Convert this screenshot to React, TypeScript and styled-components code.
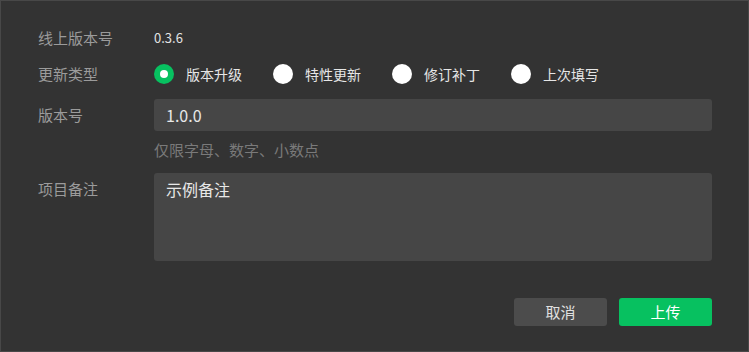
import React, { useState } from "react";
import styled, { createGlobalStyle } from "styled-components";

const Global = createGlobalStyle`
  html, body { margin: 0; padding: 0; background: #333333; }
  * { box-sizing: border-box; }
  body { font-family: "Microsoft YaHei", "Noto Sans CJK SC", "Noto Sans", sans-serif; }
`;

const Dialog = styled.div`
  width: 749px;
  height: 352px;
  background: #333333;
  border: 1px solid #484848;
  padding: 27px 36px 0 37px;
  display: flex;
  flex-direction: column;
`;

const Row = styled.div<{ $mt?: number; $h: number }>`
  display: flex;
  align-items: flex-start;
  margin-top: ${(p) => p.$mt ?? 0}px;
  min-height: ${(p) => p.$h}px;
`;

const Label = styled.div<{ $lh: number }>`
  width: 116px;
  flex: none;
  font-size: 15px;
  line-height: ${(p) => p.$lh}px;
  color: #9b9b9b;
`;

const Value = styled.div`
  font-size: 13px;
  line-height: 20px;
  color: #e3e3e3;
`;

const RadioGroup = styled.div`
  display: flex;
  align-items: center;
  gap: 31px;
`;

const RadioItem = styled.label`
  display: flex;
  align-items: center;
  gap: 12px;
  cursor: pointer;
`;

const RadioCircle = styled.span<{ $on: boolean }>`
  width: 20px;
  height: 20px;
  border-radius: 50%;
  background: ${(p) => (p.$on ? "#07c160" : "#ffffff")};
  display: flex;
  align-items: center;
  justify-content: center;
  &::after {
    content: "";
    width: 8px;
    height: 8px;
    border-radius: 50%;
    background: #ffffff;
    display: ${(p) => (p.$on ? "block" : "none")};
  }
`;

const RadioText = styled.span`
  font-size: 14px;
  line-height: 20px;
  color: #e6e6e6;
`;

const Field = styled.div`
  flex: 1;
  display: flex;
  flex-direction: column;
`;

const Input = styled.div`
  height: 32px;
  background: #464646;
  border-radius: 3px;
  padding: 0 12px;
  font-size: 16px;
  line-height: 32px;
  color: #e8e8e8;
`;

const Hint = styled.div`
  margin-top: 9px;
  font-size: 15px;
  line-height: 20px;
  color: #7a7a7a;
`;

const TextArea = styled.div`
  flex: 1;
  height: 88px;
  background: #464646;
  border-radius: 3px;
  padding: 6px 12px;
  font-size: 16px;
  line-height: 20px;
  color: #e8e8e8;
`;

const Footer = styled.div`
  margin-top: 37px;
  display: flex;
  justify-content: flex-end;
  gap: 12px;
`;

const Button = styled.button<{ $primary?: boolean }>`
  width: 93px;
  height: 28px;
  border: none;
  border-radius: 3px;
  background: ${(p) => (p.$primary ? "#07c160" : "#4c4c4c")};
  color: ${(p) => (p.$primary ? "#ffffff" : "#e0e0e0")};
  font-family: inherit;
  font-size: 15px;
  line-height: 28px;
  padding: 0;
  cursor: pointer;
`;

const options = ["版本升级", "特性更新", "修订补丁", "上次填写"];

export default function App() {
  const [sel, setSel] = useState(0);
  return (
    <>
      <Global />
      <Dialog>
        <Row $h={20}>
          <Label $lh={20}>线上版本号</Label>
          <Value>0.3.6</Value>
        </Row>
        <Row $mt={16} $h={20}>
          <Label $lh={20}>更新类型</Label>
          <RadioGroup>
            {options.map((o, i) => (
              <RadioItem key={o} onClick={() => setSel(i)}>
                <RadioCircle $on={sel === i} />
                <RadioText>{o}</RadioText>
              </RadioItem>
            ))}
          </RadioGroup>
        </Row>
        <Row $mt={15} $h={32}>
          <Label $lh={32}>版本号</Label>
          <Field>
            <Input>1.0.0</Input>
            <Hint>仅限字母、数字、小数点</Hint>
          </Field>
        </Row>
        <Row $mt={13} $h={88}>
          <Label $lh={32}>项目备注</Label>
          <TextArea>示例备注</TextArea>
        </Row>
        <Footer>
          <Button>取消</Button>
          <Button $primary>上传</Button>
        </Footer>
      </Dialog>
    </>
  );
}
